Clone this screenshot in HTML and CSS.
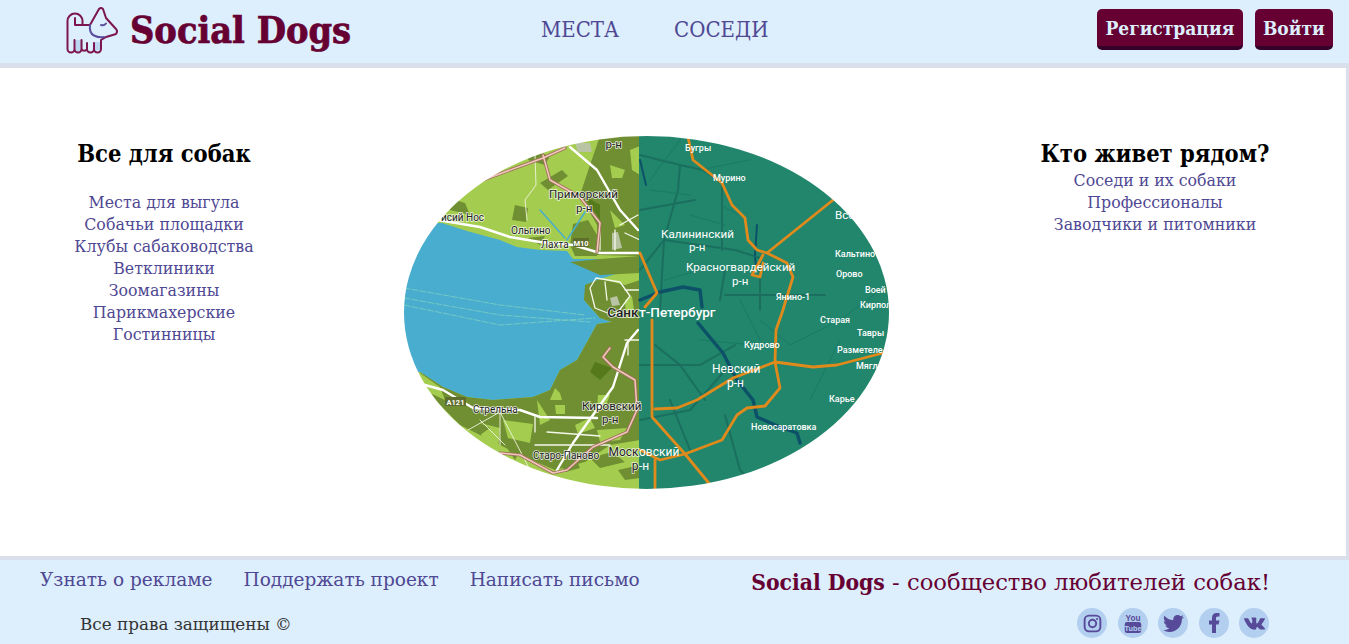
FILE: index.html
```html
<!DOCTYPE html>
<html lang="ru">
<head>
    <meta charset="UTF-8">
    <meta name="viewport" content="width=device-width, initial-scale=1.0">
    <title>Social Dogs</title>
    <link rel="stylesheet" href="styles.css">
</head>
<body>
    <header class="top">
        <a class="brand" href="#">
            <svg class="brand-icon" viewBox="66 6 52 48" width="52" height="48">
                <path class="dog-fill" d="M75 40h7.500v11h-7.500zM94 42h6v8h-6z"/>
                <path class="dog-line" d="M90 25 99 9Q101 7 103 9L106 18 116 29Q118 31 116 34L106 37 101 40V49a3.500 3.500 0 0 1-7 0v-6M94 49a3.500 3.500 0 0 1-7 0v-6M67.500 49V21a7.500 7.500 0 0 1 15 0v4H75v-7M82.500 25H90M67.500 49a3.500 3.500 0 0 0 7 0v-9M74.500 49a3.500 3.500 0 0 0 7 0v-9M81.500 49a3 3 0 0 0 5.500 0"/>
                <path class="dog-blue" d="M90 25q-1 8 4 10.500t10 1.500M101 25q3 1 5-1.500"/>
            </svg>
            <span class="brand-name">Social Dogs</span>
        </a>
        <nav class="top-nav">
            <a href="#">МЕСТА</a>
            <a href="#">СОСЕДИ</a>
        </nav>
        <div class="top-btns">
            <button class="btn">Регистрация</button>
            <button class="btn">Войти</button>
        </div>
    </header>

    <main class="content">
        <section class="side">
            <h2 class="side-title side-title-gap">Все для собак</h2>
            <a href="#">Места для выгула</a>
            <a href="#">Собачьи площадки</a>
            <a href="#">Клубы сабаководства</a>
            <a href="#">Ветклиники</a>
            <a href="#">Зоомагазины</a>
            <a href="#">Парикмахерские</a>
            <a href="#">Гостинницы</a>
        </section>

        <div class="map-wrap">
            <svg class="map" viewBox="404 136 485 353" width="485" height="353">
                <defs>
                    <clipPath id="oval"><ellipse cx="646.500" cy="312.500" rx="242.500" ry="176.500"/></clipPath>
                    <filter id="soft"><feGaussianBlur stdDeviation="0.35"/></filter>
                </defs>
                <g clip-path="url(#oval)">
                    <g filter="url(#soft)">
                        <!-- левая половина: парк и вода -->
                        <rect class="m-light" x="404" y="136" width="236" height="353"/>
                        <path class="m-water" d="M404 223H442L467 231 500 240 517 247 540 250 567 251 573 259 600 259 590 263 592 270 622 272 600 279 586 285 584 300 600 318 612 322 597 324 577 360 560 370 550 390 533 397 493 400 467 397 443 387 420 372 404 372Z"/>
                        <path class="m-dark" d="M590 165 600 136H640V256L597 255V225L580 195ZM573 224 588 220 597 235V256H575L570 245ZM570 262 600 259 640 256V273L600 275ZM585 285 600 279 625 285 640 280V350L612 322 600 318 584 300ZM577 360 597 324 612 322 640 345V440L610 445 585 462 555 470 520 455 490 440 460 425 435 400 420 372 443 387 467 397 493 400 533 397 550 390 560 370Z"/>
                        <path class="m-light" d="M420 373 440 387 445 400 428 392ZM555 388 560 393 562 400 550 400ZM555 405 565 405 565 414 556 414ZM503 420 533 424 530 443 508 438ZM480 423 500 428 498 450 482 442ZM597 430 627 428 620 440 600 442ZM537 400 550 420 540 425ZM610 165 625 170 622 178 612 178ZM575 425 590 418 595 428 578 434ZM610 210 625 225 615 228ZM598 395 610 395 605 408 597 410ZM625 300 632 296 635 318 626 318ZM630 150 640 146V175L632 170Z"/>
                        <path class="m-mid" d="M445 197 465 203 470 215 450 210ZM515 205 528 208 526 222 512 220ZM530 150 550 156 545 165 528 160ZM540 183 562 170 568 176 548 190ZM528 238 545 236 540 245ZM470 418 490 428 480 435ZM590 458 612 452 625 462 600 468ZM618 470 640 465V478L625 480ZM560 462 575 456 580 468 565 472ZM505 445 520 450 515 460Z"/>
                        <path class="m-deep" d="M595 362 612 368 600 380 590 372ZM583 195 600 205 600 220Z"/>
                        <path class="m-gray" d="M575 143 590 143 592 152 578 152ZM612 233 618 232 622 248 612 250ZM610 298 617 296 620 305 612 306Z"/>
                        <path class="m-dash" d="M404 288 500 305 585 315M404 298 500 315 590 322M404 305 500 325 595 318"/>
                        <path class="m-creek" d="M540 210 565 238M585 212 567 240"/>
                        <path class="m-road" d="M438 220 480 227 510 237 540 242 573 245 600 253 640 253M570 147 597 170 620 210 638 230M425 385 443 390 473 408 520 410 540 417 597 418M557 470 573 443 613 387 627 343 638 330"/>
                        <path class="m-minor" d="M600 223V250M620 225 638 215M615 230V250M625 233 640 240M590 288 596 278 620 282 630 296 615 316 595 308ZM605 282 607 300M625 340H640M628 340V355M535 417V432M547 432 600 436M535 445 610 445M625 290H640"/>
                        <path class="m-thin" d="M468 430 500 412 530 470M535 155 536 185 525 200 527 220M480 420 505 445M500 412V445"/>
                        <path class="m-pink-edge" d="M483 180 543 158 565 148M543 155 550 180 580 197 600 223 597 252M500 453 520 455 553 473 567 470 593 447 627 432 637 410 635 380 613 367 603 357 610 348"/>
                        <path class="m-pink" d="M483 180 543 158 565 148M543 155 550 180 580 197 600 223 597 252M500 453 520 455 553 473 567 470 593 447 627 432 637 410 635 380 613 367 603 357 610 348"/>

                        <!-- правая половина: тёмная карта -->
                        <rect class="m-teal" x="639" y="136" width="250" height="353"/>
                        <path class="m-droad" d="M640 155 680 165 703 170 722 183V250M680 165 678 190 664 240 660 310M640 210 695 200M664 240 735 250 760 258V310M640 270 664 240M725 295H825M640 365H700L735 345M655 345 680 365 705 400M640 420 690 410 730 365M670 400 690 450M725 415 740 470 760 490M725 270 720 300"/>
                        <path class="m-fine" d="M720 205 745 218M760 320 790 345 830 325M700 170 750 160M810 400 840 340M680 140 650 180M840 320 880 290M690 215 725 225M650 190 690 195M665 280 700 270M700 340 755 345M740 300 760 340"/>
                        <path class="m-river" d="M640 300 660 292 683 287 700 290 702 307M698 323 723 353 737 380 753 400 757 417 780 427 797 433 800 443"/>
                        <path class="m-stream" d="M640 160 646 185M757 225 755 255M755 258 756 265"/>
                        <path class="m-orange" d="M688 137 693 160 712 175 722 183 732 205 745 218 748 240 757 250 767 253 787 263 793 277 785 303 783 310 776 330 775 362 780 388 765 406 747 408 737 415 722 440 685 454M833 200 767 253M775 362 813 367 837 365 883 353M775 362 733 378 697 400 677 408 655 409M652 320V417L685 454 712 487M640 253 657 293 645 307M640 450 660 460 685 454M655 460V489M763 255 755 270 752 275 760 277 763 263"/>
                    </g>

                    <g class="lbl-dark">
                        <text class="t-md" x="622" y="148" text-anchor="end">р-н</text>
                        <text class="t-md" x="549" y="198">Приморский</text>
                        <text class="t-md" x="576" y="212">р-н</text>
                        <text class="t-sm" x="441" y="221">исий Нос</text>
                        <text class="t-sm" x="511" y="234">Ольгино</text>
                        <text class="t-sm" x="541" y="248">Лахта</text>
                        <text class="t-xl" x="638.500" y="317" text-anchor="end">Санк</text>
                        <text class="t-sm" x="473" y="413">Стрельна</text>
                        <text class="t-md" x="582" y="410">Кировский</text>
                        <text class="t-md" x="602" y="423">р-н</text>
                        <text class="t-sm" x="533" y="459">Старо-Паново</text>
                        <text class="t-lg" x="638.500" y="456" text-anchor="end">Моск</text>
                        <text class="t-lg" x="638.500" y="470" text-anchor="end">р</text>
                    </g>
                    <rect class="m-shield" x="573" y="238" width="16" height="9" rx="1"/>
                    <rect class="m-shield" x="445" y="397" width="21" height="9" rx="1"/>
                    <text class="t-shield" x="581" y="245.500" text-anchor="middle">M10</text>
                    <text class="t-shield" x="455.500" y="404.500" text-anchor="middle">A121</text>

                    <g class="lbl-light">
                        <text class="t-xs" x="685" y="151">Бугры</text>
                        <text class="t-xs" x="713" y="181">Мурино</text>
                        <text class="t-md" x="835" y="219">Всё</text>
                        <text class="t-md" x="661" y="238">Калининский</text>
                        <text class="t-md" x="689" y="251">р-н</text>
                        <text class="t-md" x="686" y="271">Красногвардейский</text>
                        <text class="t-md" x="732" y="285">р-н</text>
                        <text class="t-xs" x="835" y="257">Кальтино</text>
                        <text class="t-xs" x="836" y="277">Орово</text>
                        <text class="t-xs" x="776" y="300">Янино-1</text>
                        <text class="t-xs" x="865" y="293">Воей</text>
                        <text class="t-xs" x="860" y="308">Кирпол</text>
                        <text class="t-xs" x="820" y="323">Старая</text>
                        <text class="t-xs" x="857" y="336">Тавры</text>
                        <text class="t-xs" x="837" y="353">Разметеле</text>
                        <text class="t-xs" x="856" y="369">Мягл</text>
                        <text class="t-xs" x="744" y="348">Кудрово</text>
                        <text class="t-lg" x="712" y="373">Невский</text>
                        <text class="t-lg" x="727" y="387">р-н</text>
                        <text class="t-xs" x="751" y="430">Новосаратовка</text>
                        <text class="t-xs" x="829" y="402">Карье</text>
                        <text class="t-xl" x="639" y="317">т-Петербург</text>
                        <text class="t-lg" x="639" y="456">овский</text>
                        <text class="t-lg" x="639" y="470">-н</text>
                    </g>
                </g>
            </svg>
        </div>

        <section class="side">
            <h2 class="side-title">Кто живет рядом?</h2>
            <a href="#">Соседи и их собаки</a>
            <a href="#">Профессионалы</a>
            <a href="#">Заводчики и питомники</a>
        </section>
    </main>

    <footer class="bottom">
        <div class="bottom-left">
            <div class="bottom-links">
                <a href="#">Узнать о рекламе</a>
                <a href="#">Поддержать проект</a>
                <a href="#">Написать письмо</a>
            </div>
            <p class="rights">Все права защищены ©</p>
        </div>
        <div class="bottom-right">
            <p class="slogan"><b>Social Dogs</b> - сообщество любителей собак!</p>
            <div class="socials">
                <a class="soc" href="#">
                    <svg viewBox="0 0 24 24" width="21" height="21"><rect class="ico-line" x="3" y="3" width="18" height="18" rx="5"/><circle class="ico-line" cx="12" cy="12" r="4.200"/><circle class="ico" cx="17.200" cy="6.800" r="1.200"/></svg>
                </a>
                <a class="soc" href="#">
                    <svg viewBox="0 0 24 24" width="22" height="24"><text class="yt-you" x="12" y="9.500" text-anchor="middle">You</text><rect class="ico" x="3" y="11" width="18" height="12" rx="2.500"/><text class="yt-tube" x="12" y="21" text-anchor="middle">Tube</text></svg>
                </a>
                <a class="soc" href="#">
                    <svg viewBox="0 0 24 24" width="21" height="21"><path class="ico" d="M23.954 4.569c-.885.389-1.83.654-2.825.775 1.014-.611 1.794-1.574 2.163-2.723-.951.555-2.005.959-3.127 1.184-.896-.959-2.173-1.559-3.591-1.559-2.717 0-4.92 2.203-4.92 4.917 0 .39.045.765.127 1.124C7.691 8.094 4.066 6.13 1.64 3.161c-.427.722-.666 1.561-.666 2.475 0 1.71.87 3.213 2.188 4.096-.807-.026-1.566-.248-2.228-.616v.061c0 2.385 1.693 4.374 3.946 4.827-.413.111-.849.171-1.296.171-.314 0-.615-.03-.916-.086.631 1.953 2.445 3.377 4.604 3.417-1.68 1.319-3.809 2.105-6.102 2.105-.39 0-.779-.023-1.17-.067 2.189 1.394 4.768 2.209 7.557 2.209 9.054 0 13.999-7.496 13.999-13.986 0-.209 0-.42-.015-.63.961-.689 1.8-1.56 2.46-2.548l-.047-.02z"/></svg>
                </a>
                <a class="soc" href="#">
                    <svg viewBox="0 0 24 24" width="24" height="24"><path class="ico" d="M14 13.500h2.500l1-4H14v-2c0-1.030 0-2 2-2h1.500V2.140c-.326-.043-1.557-.14-2.857-.14C11.928 2 10 3.657 10 6.700v2.800H7v4h3V22h4v-8.500z"/></svg>
                </a>
                <a class="soc" href="#">
                    <svg viewBox="0 0 24 24" width="21" height="21"><path class="ico" d="M13.162 18.994c.609 0 .858-.406.851-.915-.031-1.917.714-2.949 2.059-1.604 1.488 1.488 1.796 2.519 3.603 2.519h3.2c.808 0 1.126-.26 1.126-.668 0-.863-1.421-2.386-2.625-3.504-1.686-1.565-1.765-1.602-.313-3.486 1.801-2.339 4.157-5.336 2.073-5.336h-3.981c-.772 0-.828.435-1.103 1.083-.995 2.347-2.886 5.387-3.604 4.922-.751-.485-.407-2.406-.35-5.261.015-.754.011-1.271-1.141-1.539-.629-.145-1.241-.205-1.809-.205-2.273 0-3.841.953-2.95 1.119 1.571.293 1.42 3.692 1.054 5.16-.638 2.556-3.036-2.024-4.035-4.305-.241-.548-.315-.974-1.175-.974h-3.255c-.492 0-.787.16-.787.516 0 .602 2.96 6.72 5.786 9.77 2.756 2.975 5.48 2.708 7.376 2.708z"/></svg>
                </a>
            </div>
        </div>
    </footer>
</body>
</html>
```

FILE: styles.css
```css
*{
    box-sizing: border-box;
}
body{
    margin: 0;
    height: 644px;
    overflow: hidden;
    display: flex;
    flex-direction: column;
    font-family: "DejaVu Serif", serif;
    background-color: #d9e0ec;
}
a{
    color: #4f4893;
    text-decoration: none;
}

/* шапка */
.top{
    height: 63px;
    display: grid;
    grid-template-columns: 541px 1fr auto;
    align-items: center;
    padding-right: 16px;
    padding-bottom: 4px;
    background-color: #ddeefc;
}
.brand{
    display: flex;
    align-items: center;
    gap: 12px;
    padding-left: 66px;
}
.brand-icon{
    flex: none;
}
.brand-name{
    font-family: "DejaVu Serif Condensed", "DejaVu Serif", serif;
    font-size: 37.500px;
    font-weight: bold;
    -webkit-text-stroke: 0.7px #660033;
    color: #660033;
}
.dog-fill{
    fill: #bcd6f2;
}
.dog-line, .dog-blue{
    fill: none;
    stroke: #7c1650;
    stroke-width: 2;
    stroke-linecap: round;
    stroke-linejoin: round;
}
.dog-blue{
    stroke: #5a4f9e;
}
.top-nav{
    display: flex;
    gap: 55px;
    font-family: "DejaVu Serif Condensed", "DejaVu Serif", serif;
    font-size: 22px;
}
.top-btns{
    display: flex;
    gap: 12px;
}
.btn{
    height: 41px;
    padding: 0 8.300px;
    border: 0;
    border-bottom: 4px solid #33002a;
    border-radius: 5px;
    font-family: "DejaVu Serif Condensed", "DejaVu Serif", serif;
    font-size: 19px;
    font-weight: bold;
    color: #ddeefc;
    background-color: #660033;
}

/* центр */
.content{
    height: 488px;
    margin-top: 5px;
    margin-right: 3px;
    display: grid;
    grid-template-columns: 328px 1fr 382px;
    background-color: white;
}
.side{
    display: flex;
    flex-direction: column;
    align-items: center;
    padding-top: 71px;
    font-size: 15.800px;
    line-height: 22px;
}
.side-title{
    margin: 0;
    font-family: "DejaVu Serif Condensed", "DejaVu Serif", serif;
    font-size: 23.500px;
    line-height: 31px;
    color: black;
}
.side-title-gap{
    margin-bottom: 22px;
}
.map-wrap{
    display: flex;
    justify-content: center;
    padding-top: 68px;
}
.map{
    display: block;
}

/* карта */
.m-light{ fill: #a4cd50; }
.m-dark{ fill: #6f8f30; }
.m-mid{ fill: #6f8f30; }
.m-deep{ fill: #557a1c; }
.m-water{ fill: #4aadcf; }
.m-gray{ fill: #b9c4a4; }
.m-teal{ fill: #20866c; }
.m-dash, .m-creek, .m-road, .m-minor, .m-thin, .m-pink, .m-pink-edge, .m-droad, .m-fine, .m-river, .m-stream, .m-orange{
    fill: none;
    stroke-linejoin: round;
    stroke-linecap: round;
}
.m-dash{ stroke: #7cd0c0; stroke-width: 0.8; stroke-dasharray: 6 2; }
.m-creek{ stroke: #4aadcf; stroke-width: 1.5; }
.m-road{ stroke: #fff; stroke-width: 2.400; }
.m-minor{ stroke: #f4f8ea; stroke-width: 1.300; }
.m-thin{ stroke: #eef4dc; stroke-width: 0.9; }
.m-pink-edge{ stroke: #a0705c; stroke-width: 3.200; }
.m-pink{ stroke: #f0c8bc; stroke-width: 1.500; }
.m-droad{ stroke: #1e6e5e; stroke-width: 2; }
.m-fine{ stroke: #1f7a64; stroke-width: 1; }
.m-river{ stroke: #0e5168; stroke-width: 3.400; }
.m-stream{ stroke: #0e5168; stroke-width: 2; }
.m-orange{ stroke: #e08a1e; stroke-width: 2.800; }
.m-shield{ fill: #5e6e2c; }

.map text{
    font-family: Roboto, sans-serif;
}
.t-xs{ font-size: 9px; font-weight: 500; }
.t-sm{ font-size: 10px; }
.t-md{ font-size: 11.600px; }
.t-lg{ font-size: 12px; }
.t-xl{ font-size: 13.500px; font-weight: 500; }
.t-shield{ font-size: 7.500px; font-weight: bold; fill: #fff; }
.lbl-dark text{
    fill: #222;
    stroke: #ffffffcc;
    stroke-width: 1.600;
    paint-order: stroke;
}
.lbl-light text{
    fill: #fff;
}

/* подвал */
.bottom{
    flex: 1;
    margin-top: 4px;
    display: flex;
    justify-content: space-between;
    padding-right: 79px;
    background-color: #ddeefc;
}
.bottom-links{
    display: flex;
    gap: 31px;
    padding: 8px 0 0 40px;
    font-size: 18.500px;
    line-height: 24px;
}
.rights{
    margin: 20px 0 0 80px;
    font-size: 16.800px;
    line-height: 24px;
    color: #333;
}
.bottom-right{
    display: flex;
    flex-direction: column;
    align-items: flex-end;
}
.slogan{
    margin: 6px 0 0;
    font-size: 22.700px;
    line-height: 32px;
    color: #660033;
}
.slogan b{
    font-family: "DejaVu Serif Condensed", "DejaVu Serif", serif;
}
.socials{
    display: flex;
    gap: 10.500px;
    margin: 10px 0 0;
    padding-right: 1px;
}
.soc{
    width: 30px;
    height: 30px;
    display: flex;
    align-items: center;
    justify-content: center;
    border-radius: 50%;
    background-color: #b3cfef;
}
.ico{
    fill: #574a99;
}
.ico-line{
    fill: none;
    stroke: #574a99;
    stroke-width: 2.200;
}
.yt-you{
    font-family: "Liberation Sans", sans-serif;
    font-size: 9px;
    font-weight: bold;
    fill: #574a99;
}
.yt-tube{
    font-family: "Liberation Sans", sans-serif;
    font-size: 8px;
    font-weight: bold;
    fill: #b3cfef;
}
```
